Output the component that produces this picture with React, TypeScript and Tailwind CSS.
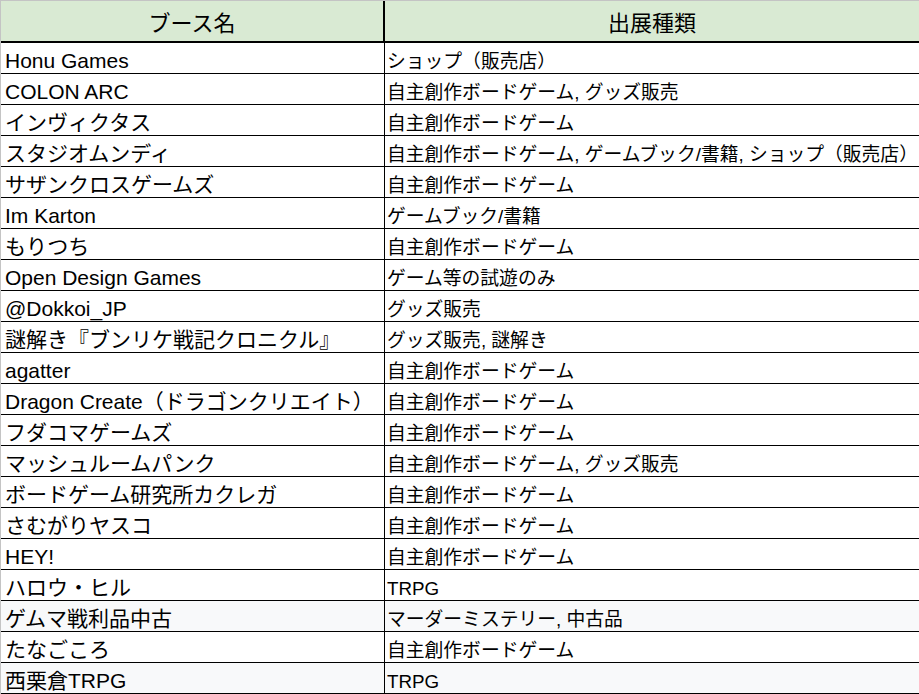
import React from "react";

type Row = { name: string; kind: string; shade?: boolean };

const rows: Row[] = [
  { name: "Honu Games", kind: "ショップ（販売店）" },
  { name: "COLON ARC", kind: "自主創作ボードゲーム, グッズ販売" },
  { name: "インヴィクタス", kind: "自主創作ボードゲーム" },
  { name: "スタジオムンディ", kind: "自主創作ボードゲーム, ゲームブック/書籍, ショップ（販売店）" },
  { name: "サザンクロスゲームズ", kind: "自主創作ボードゲーム" },
  { name: "Im Karton", kind: "ゲームブック/書籍" },
  { name: "もりつち", kind: "自主創作ボードゲーム" },
  { name: "Open Design Games", kind: "ゲーム等の試遊のみ" },
  { name: "@Dokkoi_JP", kind: "グッズ販売" },
  { name: "謎解き『ブンリケ戦記クロニクル』", kind: "グッズ販売, 謎解き" },
  { name: "agatter", kind: "自主創作ボードゲーム" },
  { name: "Dragon Create（ドラゴンクリエイト）", kind: "自主創作ボードゲーム" },
  { name: "フダコマゲームズ", kind: "自主創作ボードゲーム" },
  { name: "マッシュルームパンク", kind: "自主創作ボードゲーム, グッズ販売" },
  { name: "ボードゲーム研究所カクレガ", kind: "自主創作ボードゲーム" },
  { name: "さむがりヤスコ", kind: "自主創作ボードゲーム" },
  { name: "HEY!", kind: "自主創作ボードゲーム" },
  { name: "ハロウ・ヒル", kind: "TRPG" },
  { name: "ゲムマ戦利品中古", kind: "マーダーミステリー, 中古品", shade: true },
  { name: "たなごころ", kind: "自主創作ボードゲーム" },
  { name: "西栗倉TRPG", kind: "TRPG", shade: true },
];

export default function App() {
  return (
    <div
      className="w-[919px] h-[694px] overflow-hidden bg-white text-black"
      style={{ fontFamily: '"Liberation Sans", "Noto Sans CJK JP", sans-serif' }}
    >
      <div className="grid grid-cols-[384px_1fr] border-t border-t-[#c4c4c4] border-l border-l-[#c4c4c4]">
        <div className="h-[42px] bg-[#d9ead3] border-b-2 border-b-black border-r-2 border-r-black flex items-end justify-center pb-[4px] text-[22px] leading-[26px]">
          ブース名
        </div>
        <div className="h-[42px] bg-[#d9ead3] border-b-2 border-b-black flex items-end justify-center pb-[4px] text-[22px] leading-[26px]">
          出展種類
        </div>
        {rows.map((r, i) => (
          <React.Fragment key={i}>
            <div
              className={`h-[31px] border-b border-b-black border-r border-r-black flex items-end pl-[4px] text-[21px] leading-[24px] whitespace-nowrap ${
                r.shade ? "bg-[#f8f9fa]" : "bg-white"
              }`}
            >
              {r.name}
            </div>
            <div
              className={`h-[31px] border-b border-b-black flex items-end pl-[2px] text-[18.8px] leading-[22px] whitespace-nowrap ${
                r.shade ? "bg-[#f8f9fa]" : "bg-white"
              }`}
            >
              {r.kind}
            </div>
          </React.Fragment>
        ))}
      </div>
    </div>
  );
}
